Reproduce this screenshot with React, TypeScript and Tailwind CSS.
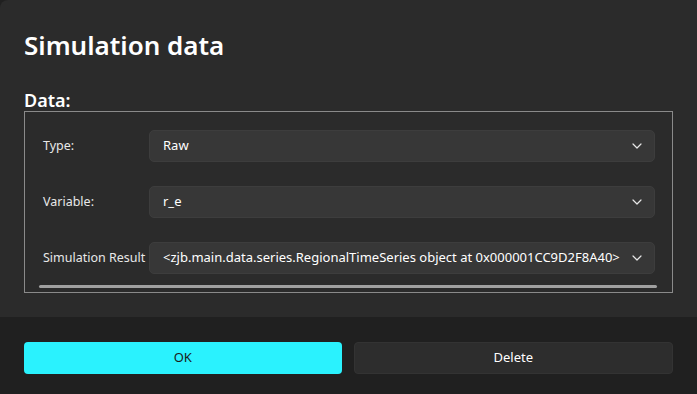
import { ReactNode } from 'react';

const Chevron = () => (
  <svg width="10" height="6" viewBox="0 0 10 6" fill="none" className="shrink-0">
    <path d="M1 1l4 4 4-4" stroke="#e6e6e6" strokeWidth="1.2" strokeLinecap="round" strokeLinejoin="round" />
  </svg>
);

const Row = ({ label, value }: { label: string; value: ReactNode }) => (
  <div className="flex items-center h-8">
    <div className="w-[106px] shrink-0 text-[12.5px] text-[#e8e8e8] whitespace-nowrap">{label}</div>
    <div className="flex-1 h-8 flex items-center justify-between pl-[13px] pr-[12px] rounded-[5px] bg-[#373737] border border-[#3d3d3d]">
      <span className="text-[13px] text-white whitespace-nowrap">{value}</span>
      <Chevron />
    </div>
  </div>
);

export default function App() {
  return (
    <div
      className="w-[697px] h-[394px] bg-[#202020] flex flex-col overflow-hidden"
      style={{ fontFamily: '"Noto Sans", "Open Sans", sans-serif' }}
    >
      <div className="h-[317px] bg-[#2b2b2b] rounded-tl-[8px] px-6 pt-[25px] flex flex-col">
        <h1 className="text-[26px] leading-[40px] font-semibold text-white">Simulation data</h1>
        <div className="mt-[25px] text-[18px] leading-[21px] font-semibold text-white">Data:</div>
        <div className="h-[182px] border border-[#8a8a8a] pl-[18px] pr-[17px] pt-[18px] flex flex-col gap-6 relative">
          <Row label="Type:" value="Raw" />
          <Row label="Variable:" value="r_e" />
          <Row
            label="Simulation Result"
            value="<zjb.main.data.series.RegionalTimeSeries object at 0x000001CC9D2F8A40>"
          />
          <div className="absolute left-[14px] right-[15px] bottom-[4px] h-[3px] rounded-full bg-[#a0a0a0]" />
        </div>
      </div>
      <div className="flex-1 px-6 pt-[25px] flex gap-3">
        <button className="flex-1 h-8 rounded-[4px] bg-[#2af2fe] text-[13px] text-[#1a1a1a]">OK</button>
        <button className="flex-1 h-8 rounded-[4px] bg-[#2d2d2d] border border-[#333333] text-[13px] text-white">
          Delete
        </button>
      </div>
    </div>
  );
}
